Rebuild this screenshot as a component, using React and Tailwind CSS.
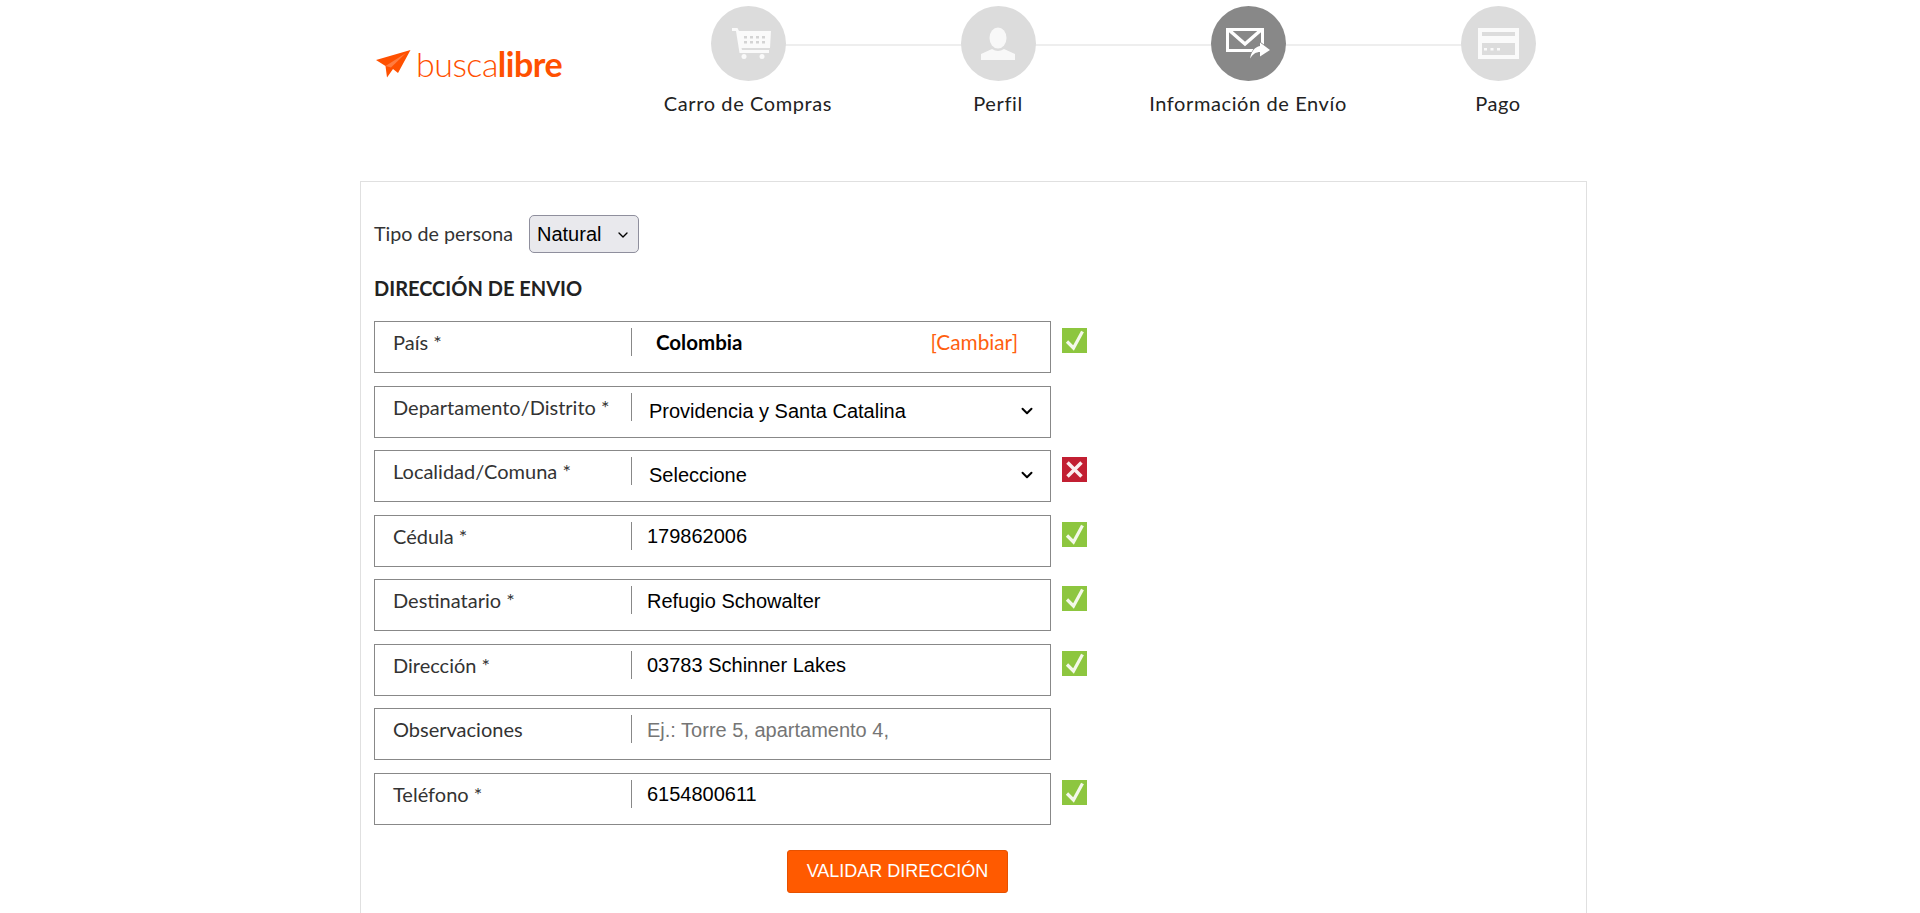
import { ChevronDown } from "lucide-react";

const steps = [
  { label: "Carro de Compras", icon: <CartIcon /> },
  { label: "Perfil", icon: <UserIcon /> },
  { label: "Información de Envío", icon: <MailIcon />, active: true },
  { label: "Pago", icon: <CardIcon /> },
];

const fields = [
  { label: "País *", type: "static", value: "Colombia", status: "ok" },
  { label: "Departamento/Distrito *", type: "select", value: "Providencia y Santa Catalina" },
  { label: "Localidad/Comuna *", type: "select", value: "Seleccione", status: "error" },
  { label: "Cédula *", type: "input", value: "179862006", status: "ok" },
  { label: "Destinatario *", type: "input", value: "Refugio Schowalter", status: "ok" },
  { label: "Dirección *", type: "input", value: "03783 Schinner Lakes", status: "ok" },
  { label: "Observaciones", type: "input", placeholder: "Ej.: Torre 5, apartamento 4," },
  { label: "Teléfono *", type: "input", value: "6154800611", status: "ok" },
];

function CartIcon() {
  const cols = [12, 18, 24, 30];
  const rows = [8, 13];
  return (
    <svg width="39" height="31" viewBox="0 0 39 31" fill="#fafafa" className="translate-x-[3px]">
      <path d="M0 0h5.500l1.500 3h32l-1 17H9.500l.5 2h27v3H7.500L4 3H0z" />
      <circle cx="12" cy="28.500" r="2.500" />
      <circle cx="30" cy="28.500" r="2.500" />
      <g fill="#d4d4d4">
        {rows.map((y) => cols.map((x) => <rect key={x + "-" + y} x={x} y={y} width="3" height="2.500" />))}
      </g>
    </svg>
  );
}

function UserIcon() {
  return (
    <svg width="34" height="34" viewBox="0 0 34 34" fill="#f8f8f8">
      <ellipse cx="17" cy="11" rx="8.500" ry="10.500" />
      <path d="M0 33v-6l11-5c4 2.500 8 2.500 12 0l11 5v6z" />
    </svg>
  );
}

function MailIcon() {
  return (
    <svg width="44" height="31" viewBox="0 0 44 31" fill="none">
      <path d="M1.500 1.500h35v21h-35z" stroke="#fff" strokeWidth="3" />
      <path d="M3 2l16 14L35 2" stroke="#fff" strokeWidth="3.500" />
      <path
        d="M24 30.500c1.500-7 4.500-11.500 10-12.500v-3.500L44 22l-10 6.500V24c-4 0-7 2-10 6.500z"
        fill="#fff"
        stroke="#888"
        strokeWidth="1.500"
        paintOrder="stroke"
      />
    </svg>
  );
}

function CardIcon() {
  return (
    <svg width="41" height="31" viewBox="0 0 41 31" fill="#fafafa">
      <path fillRule="evenodd" d="M0 0h41v31H0zM4 4v4h33V4zM4 15v12h33V15z" />
      <rect x="6" y="20" width="3" height="2.500" />
      <rect x="12.500" y="20" width="3" height="2.500" />
      <rect x="19" y="20" width="3" height="2.500" />
    </svg>
  );
}

function Logo() {
  return (
    <div className="flex items-center gap-[5px] ml-[16px] mt-[46px] text-[#ff5000]">
      <svg width="35" height="28" viewBox="0 0 35 28" fill="#ff5000" className="shrink-0">
        <path d="M0 10L34.500 0 22 23l-5-4-6 8.500L9.500 16z" />
        <path d="M9.500 16L30 3 15 17.500z" fill="#fff" fillOpacity="0.25" />
      </svg>
      <span className="text-[34px] leading-[36px] tracking-[-0.5px] font-light whitespace-nowrap">
        busca<span className="font-bold">libre</span>
      </span>
    </div>
  );
}

function StatusBadge({ status }) {
  if (status === "ok") {
    return (
      <div className="w-[25px] h-[25px] bg-[#8dc63f] mt-[7px] ml-[11px]">
        <svg width="25" height="25" viewBox="0 0 25 25" fill="none">
          <path d="M5 13.500l6.500 6.500L20.500 3.500" stroke="#f4f8ea" strokeWidth="3.200" />
        </svg>
      </div>
    );
  }
  if (status === "error") {
    return (
      <div className="w-[25px] h-[25px] bg-[#c21f32] mt-[7px] ml-[11px]">
        <svg width="25" height="25" viewBox="0 0 25 25" fill="none">
          <path d="M5.500 5.500l14 14M19.500 5.500l-14 14" stroke="#fbeeee" strokeWidth="3.500" />
        </svg>
      </div>
    );
  }
  return null;
}

function FieldValue({ field }) {
  if (field.type === "static") {
    return (
      <div className="flex-1 flex justify-between pl-[24px] pr-[32px] leading-[28px]">
        <span className="text-[20.5px] font-bold text-black">{field.value}</span>
        <a className="text-[20.8px] text-[#ff5f0f]">[Cambiar]</a>
      </div>
    );
  }
  if (field.type === "select") {
    return (
      <div className="relative flex-1 h-[38px] -mt-[1px]">
        <select
          defaultValue={field.value}
          className="appearance-none w-full h-full pl-[17px] text-[20px] text-black bg-white outline-none font-['Liberation_Sans',sans-serif]"
        >
          <option>{field.value}</option>
        </select>
        <ChevronDown size={18} strokeWidth={2.6} className="absolute right-[14px] top-[10px] text-black pointer-events-none" />
      </div>
    );
  }
  return (
    <input
      readOnly
      value={field.value ?? ""}
      placeholder={field.placeholder}
      className="flex-1 min-w-0 h-[29px] pl-[15px] text-[20px] text-black placeholder:text-[#757575] outline-none font-['Liberation_Sans',sans-serif]"
    />
  );
}

function FieldRow({ field }) {
  return (
    <div className="flex items-start">
      <div className="w-[677px] h-[52px] border border-[#888] pt-[6px] flex items-start">
        <div className="w-[257px] h-[28px] border-r border-[#888] pl-[18px] text-[20px] leading-[28px] text-[#333]">
          {field.label}
        </div>
        <FieldValue field={field} />
      </div>
      <StatusBadge status={field.status} />
    </div>
  );
}

export default function App() {
  return (
    <div className="h-[913px] overflow-hidden bg-white font-['Lato',sans-serif]">
      <div className="ml-[360px] w-[1263px]">
        <header className="flex h-[181px]">
          <div className="w-[263px] shrink-0">
            <Logo />
          </div>
          <ol className="flex">
            {steps.map((step, i) => (
              <li key={step.label} className="relative w-[250px] pt-[6px] flex flex-col items-center">
                {i < steps.length - 1 ? (
                  <div className="absolute left-1/2 top-[44px] w-[250px] h-[2px] bg-[#eeeeee]" />
                ) : null}
                <div
                  className={
                    "relative w-[75px] h-[75px] rounded-full flex items-center justify-center " +
                    (step.active ? "bg-[#888888]" : "bg-[#dcdcdc]")
                  }
                >
                  {step.icon}
                </div>
                <span className="mt-[8px] text-[20px] leading-[28px] tracking-[0.6px] text-[#222] whitespace-nowrap">
                  {step.label}
                </span>
              </li>
            ))}
          </ol>
        </header>

        <main className="w-[1227px] h-[760px] border border-[#e0e0e0] pl-[13px] pt-[33px]">
          <div className="flex items-center h-[38px]">
            <label className="text-[19.7px] text-[#333] w-[155px]">Tipo de persona</label>
            <div className="relative w-[110px] h-[38px]">
              <select
                defaultValue="Natural"
                className="appearance-none w-full h-full pl-[7px] text-[20px] text-black bg-[#e9e9ed] border border-[#8f8f9d] rounded-[5px] font-['Liberation_Sans',sans-serif]"
              >
                <option>Natural</option>
              </select>
              <ChevronDown size={16} strokeWidth={2} className="absolute right-[8px] top-[12px] text-black pointer-events-none" />
            </div>
          </div>
          <h2 className="mt-[21px] mb-[19px] text-[20px] leading-[28px] font-bold text-[#222]">DIRECCIÓN DE ENVIO</h2>
          <div className="flex flex-col gap-[12.5px]">
            {fields.map((field) => (
              <FieldRow key={field.label} field={field} />
            ))}
          </div>
          <button
            type="button"
            className="block mt-[25px] ml-[413px] w-[221px] h-[43px] rounded-[3px] bg-[#ff5a00] border border-[#e65100] text-white text-[18px] font-['Liberation_Sans',sans-serif]"
          >
            VALIDAR DIRECCIÓN
          </button>
        </main>
      </div>
    </div>
  );
}
